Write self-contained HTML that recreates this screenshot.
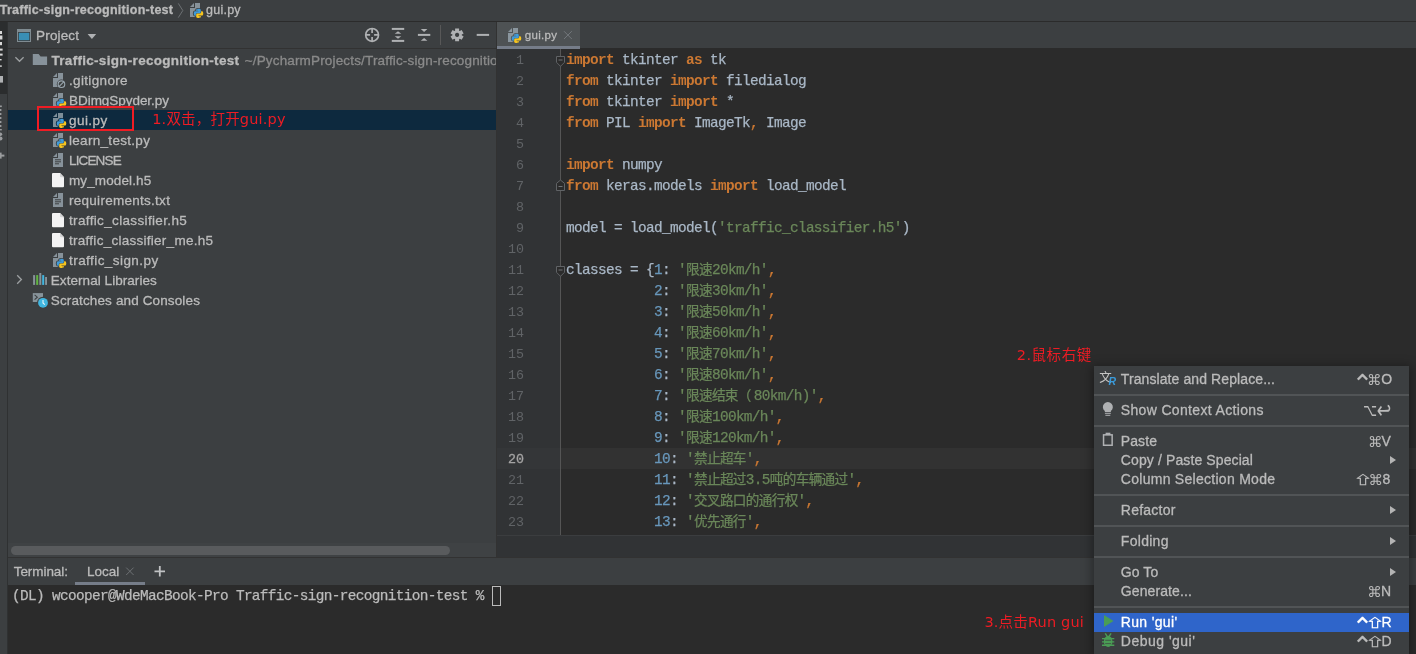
<!DOCTYPE html>
<html lang="zh">
<head>
<meta charset="utf-8">
<title>PyCharm - gui.py</title>
<style>
html,body{margin:0;padding:0;}
html{background:#3c3f41;width:1416px;height:654px;overflow:hidden;}
body{width:1416px;height:654px;overflow:hidden;background:#3c3f41;position:relative;will-change:transform;
 font-family:"Liberation Sans","Noto Sans CJK SC",sans-serif;font-size:13px;color:#bbbbbb;}
.a{position:absolute;white-space:pre;}
.ui{position:absolute;white-space:pre;line-height:20px;height:20px;font-size:13px;color:#bbbbbb;margin-top:1px;-webkit-text-stroke:0.3px currentColor;}
.mono{font-family:"Liberation Mono","Noto Sans CJK SC",monospace;}
.red{color:#ed1c24;font-family:"DejaVu Sans","Noto Sans CJK SC",sans-serif;}
/* top bar */
#topbar{left:0;top:0;width:1416px;height:21px;background:#3c3f41;}
#topline{left:0;top:21px;width:1416px;height:1px;background:#2b2b2b;}
/* left strip */
#strip{left:0;top:22px;width:7px;height:632px;background:#3c3f41;}
#stripsel{left:0;top:22px;width:7px;height:72px;background:#2b2d2e;}
#stripline{left:7px;top:22px;width:1px;height:632px;background:#2f3132;}
/* project */
#proj{left:8px;top:22px;width:489px;height:535px;background:#3c3f41;overflow:hidden;}
#projhead{left:0;top:0;width:488px;height:26px;}
#projline{left:8px;top:48px;width:489px;height:1px;background:#323232;}
#sel{left:8px;top:110px;width:488px;height:20px;background:#0d293e;}
/* editor */
#edtabs{left:497px;top:22px;width:919px;height:26px;background:#3c3f41;}
#tab{left:497px;top:22px;width:83px;height:27px;background:#4e5254;}
#tabul{left:497px;top:46px;width:83px;height:3px;background:#767d89;z-index:2;}
#edline{left:497px;top:48px;width:919px;height:1px;background:#2b2b2b;}
#gutter{left:497px;top:49px;width:63px;height:486px;background:#313335;}
#gline{left:560px;top:49px;width:1px;height:486px;background:#555555;}
#editor{left:561px;top:49px;width:855px;height:486px;background:#2b2b2b;}
#gcur{left:497px;top:448px;width:63px;height:21px;background:#343638;}
#curline{left:561px;top:448px;width:855px;height:21px;background:#323232;}
.ln{position:absolute;left:497px;width:27px;text-align:right;height:21px;line-height:21px;font-size:13.33px;color:#606366;font-family:"Liberation Mono",monospace;margin-top:1px;}
.cl{position:absolute;left:566px;height:21px;line-height:21px;font-size:14.4px;letter-spacing:-0.64px;color:#a9b7c6;white-space:pre;font-family:"Liberation Mono","Noto Sans CJK SC",monospace;margin-top:1px;-webkit-text-stroke:0.25px currentColor;}
.c{font-size:13.6px;}
.fw{margin-right:3px;}
.k{color:#cc7832;font-weight:bold;-webkit-text-stroke:0;}
.o{color:#cc7832;}
.s{color:#6a8759;}
.n{color:#6897bb;}
/* bottom */
#edbot{left:497px;top:535px;width:919px;height:22px;background:#313335;border-top:1px solid #3b3d3f;box-sizing:border-box;}
#vsplit{left:496px;top:22px;width:1px;height:535px;background:#323232;}
#htrack{left:8px;top:543px;width:488px;height:14px;background:#3f4244;}
#hscroll{left:11px;top:546px;width:439px;height:9px;border-radius:5px;background:#595b5d;}
#botline{left:8px;top:557px;width:1408px;height:1px;background:#323232;}
#termhead{left:8px;top:558px;width:1408px;height:26px;background:#3c3f41;}
#termul{left:75px;top:582px;width:70px;height:3px;background:#767d89;}
#term{left:8px;top:585px;width:1408px;height:69px;background:#2b2b2b;}
/* menu */
#menu{left:1094px;top:366px;width:315px;height:288px;overflow:hidden;background:#3c3f41;box-shadow:0 2px 10px 2px rgba(0,0,0,0.35);}
.mi{position:absolute;height:20px;line-height:20px;font-size:14px;color:#bbbbbb;white-space:pre;margin-top:0px;-webkit-text-stroke:0.3px currentColor;}
.sc{position:absolute;width:20px;text-align:center;height:20px;line-height:20px;color:#bbbbbb;white-space:pre;margin-top:1px;}
.sc.gc,.sc.gm,.sc.go,.sc.gr{font-family:"DejaVu Sans",sans-serif;}
.sc.gs{font-family:"Noto Sans CJK SC",sans-serif;}
.sc.gc{font-size:25px;margin-top:5px;-webkit-text-stroke:0.2px currentColor;}
.sc.gm{font-size:14.5px;}
.sc.go{font-size:14px;transform:scale(0.86,1.24);margin-top:-0.5px;}
.sc.gr{font-size:16px;transform:scale(1.08,1.46);}
.sc.gs{font-size:15px;transform:scale(1.2,0.79);margin-top:0px;-webkit-text-stroke:0.45px currentColor;}
.sc.l{font-size:14px;-webkit-text-stroke:0.3px currentColor;margin-top:0px;}
.sep{position:absolute;left:0;width:315px;height:2px;background:#515456;}
.arr{position:absolute;left:296px;width:0;height:0;border-left:6px solid #b4b4b4;border-top:4px solid transparent;border-bottom:4px solid transparent;}
</style>
</head>
<body>
<!-- TOP BAR -->
<div class="a" id="topbar"></div>
<div class="a" id="topline"></div>
<div class="ui" style="left:-0.3px;top:-1px;font-weight:bold;font-size:12.5px;letter-spacing:0.261px;" id="bc1">Traffic-sign-recognition-test</div>
<div class="ui" style="left:206.0px;top:-1px;font-size:12.5px;letter-spacing:0.248px;" id="bc2">gui.py</div>

<!-- LEFT STRIP -->
<div class="a" id="strip"></div>
<div class="a" id="stripsel"></div>
<div class="a" id="stripline"></div>

<!-- PROJECT PANEL -->
<div class="a" id="proj"></div>
<div class="a" id="projline"></div>
<div class="a" id="sel"></div>
<div class="ui" style="left:36.1px;top:25px;font-size:13.5px;letter-spacing:0.145px;" id="pj">Project</div>

<div class="ui" style="left:51.5px;top:50px;font-weight:bold;font-size:13.5px;letter-spacing:0.294px;" id="t0">Traffic-sign-recognition-test</div>
<div class="ui" style="left:244.7px;top:50px;color:#8a8a8a;width:251.5px;overflow:hidden;font-size:13.5px;letter-spacing:0.16px;" id="t0p">~/PycharmProjects/Traffic-sign-recognition-test</div>
<div class="ui" style="left:69.0px;top:70px;font-size:13.5px;letter-spacing:0.339px;" id="t1">.gitignore</div>
<div class="ui" style="left:69.0px;top:90px;font-size:13.5px;letter-spacing:-0.042px;" id="t2">BDimgSpyder.py</div>
<div class="ui" style="left:69.0px;top:110px;font-size:13.5px;letter-spacing:0.434px;" id="t3">gui.py</div>
<div class="ui" style="left:69.0px;top:130px;font-size:13.5px;letter-spacing:0.300px;" id="t4">learn_test.py</div>
<div class="ui" style="left:69.0px;top:150px;font-size:13.5px;letter-spacing:-0.847px;" id="t5">LICENSE</div>
<div class="ui" style="left:69.0px;top:170px;font-size:13.5px;letter-spacing:0.115px;" id="t6">my_model.h5</div>
<div class="ui" style="left:69.0px;top:190px;font-size:13.5px;letter-spacing:0.274px;" id="t7">requirements.txt</div>
<div class="ui" style="left:69.0px;top:210px;font-size:13.5px;letter-spacing:0.349px;" id="t8">traffic_classifier.h5</div>
<div class="ui" style="left:69.0px;top:230px;font-size:13.5px;letter-spacing:0.269px;" id="t9">traffic_classifier_me.h5</div>
<div class="ui" style="left:69.0px;top:250px;font-size:13.5px;letter-spacing:0.440px;" id="t10">traffic_sign.py</div>
<div class="ui" style="left:50.8px;top:270px;font-size:13.5px;letter-spacing:0.056px;" id="t11">External Libraries</div>
<div class="ui" style="left:50.8px;top:290px;font-size:13.5px;letter-spacing:0.131px;" id="t12">Scratches and Consoles</div>

<!-- EDITOR -->
<div class="a" id="edtabs"></div>
<div class="a" id="tab"></div>
<div class="a" id="tabul"></div>
<div class="a" id="edline"></div>
<div class="a" id="gutter"></div>
<div class="a" id="editor"></div>
<div class="a" id="gcur"></div>
<div class="a" id="curline"></div>
<div class="a" id="gline"></div>
<div class="ui" style="left:524.7px;top:24px;font-size:11.5px;letter-spacing:0.343px;" id="tabt">gui.py</div>

<!-- CODE -->
<div class="ln" style="top:49px;">1</div>
<div class="cl" style="top:49px"><span class="k">import</span> tkinter <span class="k">as</span> tk</div>
<div class="ln" style="top:70px;">2</div>
<div class="cl" style="top:70px"><span class="k">from</span> tkinter <span class="k">import</span> filedialog</div>
<div class="ln" style="top:91px;">3</div>
<div class="cl" style="top:91px"><span class="k">from</span> tkinter <span class="k">import</span> *</div>
<div class="ln" style="top:112px;">4</div>
<div class="cl" style="top:112px"><span class="k">from</span> PIL <span class="k">import</span> ImageTk<span class="o">,</span> Image</div>
<div class="ln" style="top:133px;">5</div>
<div class="ln" style="top:154px;">6</div>
<div class="cl" style="top:154px"><span class="k">import</span> numpy</div>
<div class="ln" style="top:175px;">7</div>
<div class="cl" style="top:175px"><span class="k">from</span> keras.models <span class="k">import</span> load_model</div>
<div class="ln" style="top:196px;">8</div>
<div class="ln" style="top:217px;">9</div>
<div class="cl" style="top:217px">model = load_model(<span class="s">'traffic_classifier.h5'</span>)</div>
<div class="ln" style="top:238px;">10</div>
<div class="ln" style="top:259px;">11</div>
<div class="cl" style="top:259px">classes = {<span class="n">1</span>: <span class="s">'<span class="c">限速</span>20km/h'</span><span class="o">,</span></div>
<div class="ln" style="top:280px;">12</div>
<div class="cl" style="top:280px">           <span class="n">2</span>: <span class="s">'<span class="c">限速</span>30km/h'</span><span class="o">,</span></div>
<div class="ln" style="top:301px;">13</div>
<div class="cl" style="top:301px">           <span class="n">3</span>: <span class="s">'<span class="c">限速</span>50km/h'</span><span class="o">,</span></div>
<div class="ln" style="top:322px;">14</div>
<div class="cl" style="top:322px">           <span class="n">4</span>: <span class="s">'<span class="c">限速</span>60km/h'</span><span class="o">,</span></div>
<div class="ln" style="top:343px;">15</div>
<div class="cl" style="top:343px">           <span class="n">5</span>: <span class="s">'<span class="c">限速</span>70km/h'</span><span class="o">,</span></div>
<div class="ln" style="top:364px;">16</div>
<div class="cl" style="top:364px">           <span class="n">6</span>: <span class="s">'<span class="c">限速</span>80km/h'</span><span class="o">,</span></div>
<div class="ln" style="top:385px;">17</div>
<div class="cl" style="top:385px">           <span class="n">7</span>: <span class="s">'<span class="c">限速结束<span class="fw">（</span></span>80km/h)'</span><span class="o">,</span></div>
<div class="ln" style="top:406px;">18</div>
<div class="cl" style="top:406px">           <span class="n">8</span>: <span class="s">'<span class="c">限速</span>100km/h'</span><span class="o">,</span></div>
<div class="ln" style="top:427px;">19</div>
<div class="cl" style="top:427px">           <span class="n">9</span>: <span class="s">'<span class="c">限速</span>120km/h'</span><span class="o">,</span></div>
<div class="ln" style="top:448px;color:#a4a3a3;-webkit-text-stroke:0.3px #a4a3a3;">20</div>
<div class="cl" style="top:448px">           <span class="n">10</span>: <span class="s">'<span class="c">禁止超车</span>'</span><span class="o">,</span></div>
<div class="ln" style="top:469px;">21</div>
<div class="cl" style="top:469px">           <span class="n">11</span>: <span class="s">'<span class="c">禁止超过</span>3.5<span class="c">吨的车辆通过</span>'</span><span class="o">,</span></div>
<div class="ln" style="top:490px;">22</div>
<div class="cl" style="top:490px">           <span class="n">12</span>: <span class="s">'<span class="c">交叉路口的通行权</span>'</span><span class="o">,</span></div>
<div class="ln" style="top:511px;">23</div>
<div class="cl" style="top:511px">           <span class="n">13</span>: <span class="s">'<span class="c">优先通行</span>'</span><span class="o">,</span></div>
<!-- BOTTOM -->
<div class="a" id="edbot"></div>
<div class="a" id="vsplit"></div>
<div class="a" id="htrack"></div>
<div class="a" id="hscroll"></div>
<div class="a" id="botline"></div>
<div class="a" id="termhead"></div>
<div class="a" id="term"></div>
<div class="a" id="termul"></div>
<div class="ui" style="left:13.7px;top:561px;font-size:13.5px;letter-spacing:-0.058px;" id="tm1">Terminal:</div>
<div class="ui" style="left:87.1px;top:561px;font-size:13.5px;letter-spacing:-0.020px;" id="tm2">Local</div>
<div class="a mono" style="left:12px;top:586px;height:21px;line-height:21px;font-size:14.4px;letter-spacing:-0.64px;color:#bbbbbb;-webkit-text-stroke:0.25px currentColor;" id="tmt">(DL) wcooper@WdeMacBook-Pro Traffic-sign-recognition-test % </div>
<div class="a" style="left:492px;top:586px;width:7px;height:18px;border:1px solid #bbbbbb;" id="cursor"></div>

<!-- ICONS -->
<svg class="a" style="left:0;top:0;pointer-events:none" width="1416" height="654" viewBox="0 0 1416 654">
<path d="M178.3,3.4 L182.8,10.5 L178.3,17.6" fill="none" stroke="#6c7073" stroke-width="1"/>
<g transform="translate(188,2)" fill="#9AA7B0" fill-opacity="0.8"><polygon points="6,1 2,5 6,5"/><polygon points="7,1 7,6 2,6 2,15 12,15 12,1"/></g><g transform="translate(188,2) translate(5.7,6.85) scale(0.0864,0.0832)"><path d="M54.9,0 C26.8,0 28.6,12.2 28.6,12.2 l0.03,12.6 h26.8 v3.8 H17.9 C17.9,28.6 0,26.6 0,54.9 c0,28.3 15.7,27.3 15.7,27.3 h9.4 V69.1 c0,0 -0.5,-15.7 15.4,-15.7 h26.6 c0,0 14.9,0.24 14.9,-14.4 V14.8 C82,14.8 84.3,0 54.9,0 z" fill="#3c3f41" stroke="#3c3f41" stroke-width="20" stroke-linejoin="round"/><path d="M55.7,110 c28.1,0 26.3,-12.2 26.3,-12.2 l-0.03,-12.6 H55.2 v-3.8 h37.5 c0,0 18,2 18,-26.3 c0,-28.3 -15.7,-27.3 -15.7,-27.3 h-9.4 v13.1 c0,0 0.5,15.7 -15.4,15.7 H43.6 c0,0 -14.9,-0.24 -14.9,14.4 v24.2 c0,0 -2.3,14.8 27.1,14.8 z" fill="#3c3f41" stroke="#3c3f41" stroke-width="20" stroke-linejoin="round"/><path d="M54.9,0 C26.8,0 28.6,12.2 28.6,12.2 l0.03,12.6 h26.8 v3.8 H17.9 C17.9,28.6 0,26.6 0,54.9 c0,28.3 15.7,27.3 15.7,27.3 h9.4 V69.1 c0,0 -0.5,-15.7 15.4,-15.7 h26.6 c0,0 14.9,0.24 14.9,-14.4 V14.8 C82,14.8 84.3,0 54.9,0 z" fill="#3f9bd8"/><path d="M55.7,110 c28.1,0 26.3,-12.2 26.3,-12.2 l-0.03,-12.6 H55.2 v-3.8 h37.5 c0,0 18,2 18,-26.3 c0,-28.3 -15.7,-27.3 -15.7,-27.3 h-9.4 v13.1 c0,0 0.5,15.7 -15.4,15.7 H43.6 c0,0 -14.9,-0.24 -14.9,14.4 v24.2 c0,0 -2.3,14.8 27.1,14.8 z" fill="#f7c51e"/><circle cx="40" cy="13.5" r="5" fill="#3c3f41"/><circle cx="70.5" cy="96.5" r="5" fill="#3c3f41"/></g>
<rect x="17.5" y="29.5" width="13" height="12" fill="none" stroke="#7f8b91" stroke-width="1"/><rect x="17" y="29" width="14" height="3" fill="#7f8b91"/><rect x="18.8" y="32.8" width="10.5" height="7.4" fill="#3a8fb5"/>
<polygon points="87.6,34 96.2,34 91.9,39" fill="#afb1b3"/>
<g fill="none" stroke="#afb1b3" stroke-width="1.7"><circle cx="372.1" cy="34.9" r="6.4"/><path d="M372.1,28.4 V32.9 M372.1,36.9 V41.4 M365.6,34.9 H370.1 M374.1,34.9 H378.6"/></g>
<g fill="#afb1b3"><rect x="391.8" y="27.9" width="12.4" height="2"/><rect x="391.8" y="39.9" width="12.4" height="2"/><polygon points="398,31.2 401.3,33.8 394.7,33.8"/><polygon points="398,38.8 401.3,36.2 394.7,36.2"/></g>
<g fill="#afb1b3"><rect x="417.9" y="33.9" width="12.4" height="2"/><polygon points="420.8,29.1 427.4,29.1 424.1,31.9"/><polygon points="420.8,40.8 427.4,40.8 424.1,37.9"/></g>
<rect x="440" y="25" width="1" height="20" fill="#585858"/>
<path d="M455.12,28.50 L459.08,28.50 L459.10,30.65 L459.78,31.04 L461.65,29.98 L463.63,33.41 L461.78,34.51 L461.78,35.29 L463.63,36.39 L461.65,39.82 L459.78,38.76 L459.10,39.15 L459.08,41.30 L455.12,41.30 L455.10,39.15 L454.42,38.76 L452.55,39.82 L450.57,36.39 L452.42,35.29 L452.42,34.51 L450.57,33.41 L452.55,29.98 L454.42,31.04 L455.10,30.65 Z M457.10,32.80 a2.1,2.1 0 1 0 0.01,0z" fill="#afb1b3" fill-rule="evenodd"/>
<rect x="476.7" y="33.9" width="12.4" height="2" fill="#afb1b3"/>
<path d="M15.4,57.2 L19.5,61.3 L23.6,57.2" fill="none" stroke="#9da0a2" stroke-width="1.3"/>
<path d="M17.2,275.3 L21.4,279.5 L17.2,283.7" fill="none" stroke="#9da0a2" stroke-width="1.3"/>
<path d="M32.8,54 H38.6 L40.6,56.6 H47.1 V65 H32.8 Z" fill="#9AA7B0" fill-opacity=".8"/>
<g transform="translate(51,72)" fill="#9AA7B0" fill-opacity="0.8"><polygon points="6,1 2,5 6,5"/><polygon points="7,1 7,6 2,6 2,15 12,15 12,1"/></g><g transform="translate(51,72)"><circle cx="10.45" cy="12.15" r="4.6" fill="#3c3f41"/><circle cx="10.45" cy="12.15" r="3.3" fill="none" stroke="#9AA7B0" stroke-width="1.1"/><path d="M8.2,14.4 L12.7,9.9" stroke="#9AA7B0" stroke-width="1.1"/></g>
<g transform="translate(51,92)" fill="#9AA7B0" fill-opacity="0.8"><polygon points="6,1 2,5 6,5"/><polygon points="7,1 7,6 2,6 2,15 12,15 12,1"/></g><g transform="translate(51,92) translate(5.7,6.85) scale(0.0864,0.0832)"><path d="M54.9,0 C26.8,0 28.6,12.2 28.6,12.2 l0.03,12.6 h26.8 v3.8 H17.9 C17.9,28.6 0,26.6 0,54.9 c0,28.3 15.7,27.3 15.7,27.3 h9.4 V69.1 c0,0 -0.5,-15.7 15.4,-15.7 h26.6 c0,0 14.9,0.24 14.9,-14.4 V14.8 C82,14.8 84.3,0 54.9,0 z" fill="#3c3f41" stroke="#3c3f41" stroke-width="20" stroke-linejoin="round"/><path d="M55.7,110 c28.1,0 26.3,-12.2 26.3,-12.2 l-0.03,-12.6 H55.2 v-3.8 h37.5 c0,0 18,2 18,-26.3 c0,-28.3 -15.7,-27.3 -15.7,-27.3 h-9.4 v13.1 c0,0 0.5,15.7 -15.4,15.7 H43.6 c0,0 -14.9,-0.24 -14.9,14.4 v24.2 c0,0 -2.3,14.8 27.1,14.8 z" fill="#3c3f41" stroke="#3c3f41" stroke-width="20" stroke-linejoin="round"/><path d="M54.9,0 C26.8,0 28.6,12.2 28.6,12.2 l0.03,12.6 h26.8 v3.8 H17.9 C17.9,28.6 0,26.6 0,54.9 c0,28.3 15.7,27.3 15.7,27.3 h9.4 V69.1 c0,0 -0.5,-15.7 15.4,-15.7 h26.6 c0,0 14.9,0.24 14.9,-14.4 V14.8 C82,14.8 84.3,0 54.9,0 z" fill="#3f9bd8"/><path d="M55.7,110 c28.1,0 26.3,-12.2 26.3,-12.2 l-0.03,-12.6 H55.2 v-3.8 h37.5 c0,0 18,2 18,-26.3 c0,-28.3 -15.7,-27.3 -15.7,-27.3 h-9.4 v13.1 c0,0 0.5,15.7 -15.4,15.7 H43.6 c0,0 -14.9,-0.24 -14.9,14.4 v24.2 c0,0 -2.3,14.8 27.1,14.8 z" fill="#f7c51e"/><circle cx="40" cy="13.5" r="5" fill="#3c3f41"/><circle cx="70.5" cy="96.5" r="5" fill="#3c3f41"/></g>
<g transform="translate(51,112)" fill="#9AA7B0" fill-opacity="0.8"><polygon points="6,1 2,5 6,5"/><polygon points="7,1 7,6 2,6 2,15 12,15 12,1"/></g><g transform="translate(51,112) translate(5.7,6.85) scale(0.0864,0.0832)"><path d="M54.9,0 C26.8,0 28.6,12.2 28.6,12.2 l0.03,12.6 h26.8 v3.8 H17.9 C17.9,28.6 0,26.6 0,54.9 c0,28.3 15.7,27.3 15.7,27.3 h9.4 V69.1 c0,0 -0.5,-15.7 15.4,-15.7 h26.6 c0,0 14.9,0.24 14.9,-14.4 V14.8 C82,14.8 84.3,0 54.9,0 z" fill="#0d293e" stroke="#0d293e" stroke-width="20" stroke-linejoin="round"/><path d="M55.7,110 c28.1,0 26.3,-12.2 26.3,-12.2 l-0.03,-12.6 H55.2 v-3.8 h37.5 c0,0 18,2 18,-26.3 c0,-28.3 -15.7,-27.3 -15.7,-27.3 h-9.4 v13.1 c0,0 0.5,15.7 -15.4,15.7 H43.6 c0,0 -14.9,-0.24 -14.9,14.4 v24.2 c0,0 -2.3,14.8 27.1,14.8 z" fill="#0d293e" stroke="#0d293e" stroke-width="20" stroke-linejoin="round"/><path d="M54.9,0 C26.8,0 28.6,12.2 28.6,12.2 l0.03,12.6 h26.8 v3.8 H17.9 C17.9,28.6 0,26.6 0,54.9 c0,28.3 15.7,27.3 15.7,27.3 h9.4 V69.1 c0,0 -0.5,-15.7 15.4,-15.7 h26.6 c0,0 14.9,0.24 14.9,-14.4 V14.8 C82,14.8 84.3,0 54.9,0 z" fill="#3f9bd8"/><path d="M55.7,110 c28.1,0 26.3,-12.2 26.3,-12.2 l-0.03,-12.6 H55.2 v-3.8 h37.5 c0,0 18,2 18,-26.3 c0,-28.3 -15.7,-27.3 -15.7,-27.3 h-9.4 v13.1 c0,0 0.5,15.7 -15.4,15.7 H43.6 c0,0 -14.9,-0.24 -14.9,14.4 v24.2 c0,0 -2.3,14.8 27.1,14.8 z" fill="#f7c51e"/><circle cx="40" cy="13.5" r="5" fill="#0d293e"/><circle cx="70.5" cy="96.5" r="5" fill="#0d293e"/></g>
<g transform="translate(51,132)" fill="#9AA7B0" fill-opacity="0.8"><polygon points="6,1 2,5 6,5"/><polygon points="7,1 7,6 2,6 2,15 12,15 12,1"/></g><g transform="translate(51,132) translate(5.7,6.85) scale(0.0864,0.0832)"><path d="M54.9,0 C26.8,0 28.6,12.2 28.6,12.2 l0.03,12.6 h26.8 v3.8 H17.9 C17.9,28.6 0,26.6 0,54.9 c0,28.3 15.7,27.3 15.7,27.3 h9.4 V69.1 c0,0 -0.5,-15.7 15.4,-15.7 h26.6 c0,0 14.9,0.24 14.9,-14.4 V14.8 C82,14.8 84.3,0 54.9,0 z" fill="#3c3f41" stroke="#3c3f41" stroke-width="20" stroke-linejoin="round"/><path d="M55.7,110 c28.1,0 26.3,-12.2 26.3,-12.2 l-0.03,-12.6 H55.2 v-3.8 h37.5 c0,0 18,2 18,-26.3 c0,-28.3 -15.7,-27.3 -15.7,-27.3 h-9.4 v13.1 c0,0 0.5,15.7 -15.4,15.7 H43.6 c0,0 -14.9,-0.24 -14.9,14.4 v24.2 c0,0 -2.3,14.8 27.1,14.8 z" fill="#3c3f41" stroke="#3c3f41" stroke-width="20" stroke-linejoin="round"/><path d="M54.9,0 C26.8,0 28.6,12.2 28.6,12.2 l0.03,12.6 h26.8 v3.8 H17.9 C17.9,28.6 0,26.6 0,54.9 c0,28.3 15.7,27.3 15.7,27.3 h9.4 V69.1 c0,0 -0.5,-15.7 15.4,-15.7 h26.6 c0,0 14.9,0.24 14.9,-14.4 V14.8 C82,14.8 84.3,0 54.9,0 z" fill="#3f9bd8"/><path d="M55.7,110 c28.1,0 26.3,-12.2 26.3,-12.2 l-0.03,-12.6 H55.2 v-3.8 h37.5 c0,0 18,2 18,-26.3 c0,-28.3 -15.7,-27.3 -15.7,-27.3 h-9.4 v13.1 c0,0 0.5,15.7 -15.4,15.7 H43.6 c0,0 -14.9,-0.24 -14.9,14.4 v24.2 c0,0 -2.3,14.8 27.1,14.8 z" fill="#f7c51e"/><circle cx="40" cy="13.5" r="5" fill="#3c3f41"/><circle cx="70.5" cy="96.5" r="5" fill="#3c3f41"/></g>
<g transform="translate(51,152)" fill="#9AA7B0" fill-opacity="0.8"><polygon points="6,1 2,5 6,5"/><polygon points="7,1 7,6 2,6 2,15 12,15 12,1"/></g><g transform="translate(51,152)" fill="#3c3f41"><rect x="4" y="7.3" width="6" height="1"/><rect x="4" y="9.3" width="6" height="1"/><rect x="4" y="11.3" width="4" height="1"/></g>
<g transform="translate(52,173)"><path d="M1,0 H8 L12,4.2 V13.2 a1,1 0 0 1 -1,1 H1 a1,1 0 0 1 -1,-1 V1 a1,1 0 0 1 1,-1z" fill="#f3f3f3"/><path d="M8,0 L12,4.2 H9 a1,1 0 0 1 -1,-1z" fill="#d4d4d4"/><path d="M8,0 L12,4.2" stroke="#bdbdbd" stroke-width="0.5" fill="none"/></g>
<g transform="translate(51,192)" fill="#9AA7B0" fill-opacity="0.8"><polygon points="6,1 2,5 6,5"/><polygon points="7,1 7,6 2,6 2,15 12,15 12,1"/></g><g transform="translate(51,192)" fill="#3c3f41"><rect x="4" y="7.3" width="6" height="1"/><rect x="4" y="9.3" width="6" height="1"/><rect x="4" y="11.3" width="4" height="1"/></g>
<g transform="translate(52,213)"><path d="M1,0 H8 L12,4.2 V13.2 a1,1 0 0 1 -1,1 H1 a1,1 0 0 1 -1,-1 V1 a1,1 0 0 1 1,-1z" fill="#f3f3f3"/><path d="M8,0 L12,4.2 H9 a1,1 0 0 1 -1,-1z" fill="#d4d4d4"/><path d="M8,0 L12,4.2" stroke="#bdbdbd" stroke-width="0.5" fill="none"/></g>
<g transform="translate(52,233)"><path d="M1,0 H8 L12,4.2 V13.2 a1,1 0 0 1 -1,1 H1 a1,1 0 0 1 -1,-1 V1 a1,1 0 0 1 1,-1z" fill="#f3f3f3"/><path d="M8,0 L12,4.2 H9 a1,1 0 0 1 -1,-1z" fill="#d4d4d4"/><path d="M8,0 L12,4.2" stroke="#bdbdbd" stroke-width="0.5" fill="none"/></g>
<g transform="translate(51,252)" fill="#9AA7B0" fill-opacity="0.8"><polygon points="6,1 2,5 6,5"/><polygon points="7,1 7,6 2,6 2,15 12,15 12,1"/></g><g transform="translate(51,252) translate(5.7,6.85) scale(0.0864,0.0832)"><path d="M54.9,0 C26.8,0 28.6,12.2 28.6,12.2 l0.03,12.6 h26.8 v3.8 H17.9 C17.9,28.6 0,26.6 0,54.9 c0,28.3 15.7,27.3 15.7,27.3 h9.4 V69.1 c0,0 -0.5,-15.7 15.4,-15.7 h26.6 c0,0 14.9,0.24 14.9,-14.4 V14.8 C82,14.8 84.3,0 54.9,0 z" fill="#3c3f41" stroke="#3c3f41" stroke-width="20" stroke-linejoin="round"/><path d="M55.7,110 c28.1,0 26.3,-12.2 26.3,-12.2 l-0.03,-12.6 H55.2 v-3.8 h37.5 c0,0 18,2 18,-26.3 c0,-28.3 -15.7,-27.3 -15.7,-27.3 h-9.4 v13.1 c0,0 0.5,15.7 -15.4,15.7 H43.6 c0,0 -14.9,-0.24 -14.9,14.4 v24.2 c0,0 -2.3,14.8 27.1,14.8 z" fill="#3c3f41" stroke="#3c3f41" stroke-width="20" stroke-linejoin="round"/><path d="M54.9,0 C26.8,0 28.6,12.2 28.6,12.2 l0.03,12.6 h26.8 v3.8 H17.9 C17.9,28.6 0,26.6 0,54.9 c0,28.3 15.7,27.3 15.7,27.3 h9.4 V69.1 c0,0 -0.5,-15.7 15.4,-15.7 h26.6 c0,0 14.9,0.24 14.9,-14.4 V14.8 C82,14.8 84.3,0 54.9,0 z" fill="#3f9bd8"/><path d="M55.7,110 c28.1,0 26.3,-12.2 26.3,-12.2 l-0.03,-12.6 H55.2 v-3.8 h37.5 c0,0 18,2 18,-26.3 c0,-28.3 -15.7,-27.3 -15.7,-27.3 h-9.4 v13.1 c0,0 0.5,15.7 -15.4,15.7 H43.6 c0,0 -14.9,-0.24 -14.9,14.4 v24.2 c0,0 -2.3,14.8 27.1,14.8 z" fill="#f7c51e"/><circle cx="40" cy="13.5" r="5" fill="#3c3f41"/><circle cx="70.5" cy="96.5" r="5" fill="#3c3f41"/></g>
<g><rect x="33.1" y="275.1" width="2" height="9.8" fill="#87939a"/><rect x="36.2" y="275.1" width="2" height="9.8" fill="#62b543"/><rect x="39.3" y="273" width="2" height="11.9" fill="#87939a"/><rect x="42.2" y="275.1" width="2" height="9.8" fill="#40b6e0"/><rect x="45.1" y="277" width="1.9" height="7.9" fill="#87939a"/></g>
<g><rect x="32.8" y="293.1" width="10.2" height="8.9" fill="#87939a"/><path d="M34.6,294.8 L37.3,297.2 L34.6,299.6" fill="none" stroke="#3c3f41" stroke-width="1.1"/><circle cx="43" cy="302.8" r="6" fill="#3c3f41"/><circle cx="43" cy="302.8" r="4.9" fill="#40b6e0"/><path d="M43,300 V303 L44.8,304.6" fill="none" stroke="#e8f6fb" stroke-width="1.1"/></g>
<g transform="translate(506,27)" fill="#9AA7B0" fill-opacity="0.8"><polygon points="6,1 2,5 6,5"/><polygon points="7,1 7,6 2,6 2,15 12,15 12,1"/></g><g transform="translate(506,27) translate(5.7,6.85) scale(0.0864,0.0832)"><path d="M54.9,0 C26.8,0 28.6,12.2 28.6,12.2 l0.03,12.6 h26.8 v3.8 H17.9 C17.9,28.6 0,26.6 0,54.9 c0,28.3 15.7,27.3 15.7,27.3 h9.4 V69.1 c0,0 -0.5,-15.7 15.4,-15.7 h26.6 c0,0 14.9,0.24 14.9,-14.4 V14.8 C82,14.8 84.3,0 54.9,0 z" fill="#4e5254" stroke="#4e5254" stroke-width="20" stroke-linejoin="round"/><path d="M55.7,110 c28.1,0 26.3,-12.2 26.3,-12.2 l-0.03,-12.6 H55.2 v-3.8 h37.5 c0,0 18,2 18,-26.3 c0,-28.3 -15.7,-27.3 -15.7,-27.3 h-9.4 v13.1 c0,0 0.5,15.7 -15.4,15.7 H43.6 c0,0 -14.9,-0.24 -14.9,14.4 v24.2 c0,0 -2.3,14.8 27.1,14.8 z" fill="#4e5254" stroke="#4e5254" stroke-width="20" stroke-linejoin="round"/><path d="M54.9,0 C26.8,0 28.6,12.2 28.6,12.2 l0.03,12.6 h26.8 v3.8 H17.9 C17.9,28.6 0,26.6 0,54.9 c0,28.3 15.7,27.3 15.7,27.3 h9.4 V69.1 c0,0 -0.5,-15.7 15.4,-15.7 h26.6 c0,0 14.9,0.24 14.9,-14.4 V14.8 C82,14.8 84.3,0 54.9,0 z" fill="#3f9bd8"/><path d="M55.7,110 c28.1,0 26.3,-12.2 26.3,-12.2 l-0.03,-12.6 H55.2 v-3.8 h37.5 c0,0 18,2 18,-26.3 c0,-28.3 -15.7,-27.3 -15.7,-27.3 h-9.4 v13.1 c0,0 0.5,15.7 -15.4,15.7 H43.6 c0,0 -14.9,-0.24 -14.9,14.4 v24.2 c0,0 -2.3,14.8 27.1,14.8 z" fill="#f7c51e"/><circle cx="40" cy="13.5" r="5" fill="#4e5254"/><circle cx="70.5" cy="96.5" r="5" fill="#4e5254"/></g>
<path d="M564,31.2 L571.8,39 M571.8,31.2 L564,39" stroke="#767b7f" stroke-width="0.9" fill="none"/>
<path d="M556.5,56.5 H564.5 V62.3 L560.5,66.3 L556.5,62.3 Z" fill="#2b2b2b" stroke="#606366" stroke-width="1"/><path d="M558.5,60.0 H562.5" stroke="#707376" stroke-width="1"/>
<path d="M556.5,266.5 H564.5 V272.3 L560.5,276.3 L556.5,272.3 Z" fill="#2b2b2b" stroke="#606366" stroke-width="1"/><path d="M558.5,270.0 H562.5" stroke="#707376" stroke-width="1"/>
<path d="M556.5,190.5 H564.5 V183.3 L560.5,180.1 L556.5,183.3 Z" fill="#2b2b2b" stroke="#606366" stroke-width="1"/><path d="M558.5,186.5 H562.5" stroke="#707376" stroke-width="1"/>
<path d="M126.2,567.6 L133.6,575 M133.6,567.6 L126.2,575" stroke="#6c7073" stroke-width="1" fill="none"/>
<path d="M154.5,571.3 H165 M159.8,566 V576.6" stroke="#c0c2c4" stroke-width="1.8" fill="none"/>
<g fill="#d8d8d8"><rect x="0" y="31" width="2" height="3"/><rect x="0" y="35.5" width="2.4" height="4"/><rect x="0" y="42" width="2" height="3.2"/><rect x="0" y="48.6" width="2.6" height="2"/><rect x="0" y="53.6" width="2.6" height="2"/><rect x="0" y="59" width="1.6" height="1.4"/><rect x="0" y="65.4" width="1.8" height="1.4"/></g>
<rect x="0" y="76" width="3" height="6.6" fill="#afb1b3"/>
<g fill="#9a9c9e"><rect x="0" y="105.5" width="1.8" height="1.6"/><rect x="0" y="109" width="1.4" height="2"/><rect x="0" y="113" width="1.4" height="2"/><rect x="0" y="117" width="1.4" height="2"/><rect x="0" y="121" width="1.4" height="2"/><rect x="0" y="125" width="1.4" height="2"/><rect x="0" y="129" width="1.8" height="1.4"/><circle cx="0.4" cy="134.3" r="1.8"/><circle cx="0.4" cy="138.5" r="2.1"/><rect x="0" y="154.6" width="4.4" height="2"/><rect x="0" y="152.6" width="1.6" height="6"/></g>
</svg>
<!-- /ICONS -->
<!-- ANNOTATIONS -->
<div class="a" style="left:39px;top:108px;width:93px;height:2px;background:#3c3f41;"></div>
<div class="a" style="left:37px;top:106px;width:93px;height:21px;border:2px solid #f01c24;"></div>
<div class="a red" style="left:152.2px;top:109px;height:20px;line-height:20px;font-size:14.5px;letter-spacing:0.187px;" id="r1">1.双击，打开gui.py</div>
<div class="a red" style="left:1016.7px;top:345px;height:20px;line-height:20px;font-size:14.5px;letter-spacing:0.531px;" id="r2">2.鼠标右键</div>
<div class="a red" style="left:984.4px;top:612px;height:20px;line-height:20px;font-size:14.5px;letter-spacing:0.183px;" id="r3">3.点击Run gui</div>
<!-- /ANNOTATIONS -->
<!-- MENU -->
<div class="a" id="menu">
<div class="a" style="left:0;top:247px;width:315px;height:19px;background:#2f65ca;"></div>
<div class="sep" style="top:28px"></div>
<div class="sep" style="top:59px"></div>
<div class="sep" style="top:128px"></div>
<div class="sep" style="top:159px"></div>
<div class="sep" style="top:190px"></div>
<div class="sep" style="top:240px"></div>
<div class="mi" style="left:26.8px;top:3.1px;font-size:14px;letter-spacing:0.095px;" id="m1">Translate and Replace...</div>
<div class="sc gc" style="left:258.0px;top:3.1px;">⌃</div>
<div class="sc gm" style="left:270.3px;top:3.1px;">⌘</div>
<div class="sc l" style="left:282.6px;top:3.1px;">O</div>
<div class="mi" style="left:26.8px;top:34.2px;font-size:14px;letter-spacing:0.337px;" id="m2">Show Context Actions</div>
<div class="sc go" style="left:265.9px;top:34.2px;">⌥</div>
<div class="sc gr" style="left:280.1px;top:34.2px;">↩</div>
<div class="mi" style="left:26.8px;top:64.8px;font-size:14px;letter-spacing:0.097px;" id="m3">Paste</div>
<div class="sc gm" style="left:271.3px;top:64.8px;">⌘</div>
<div class="sc l" style="left:282.2px;top:64.8px;">V</div>
<div class="mi" style="left:26.8px;top:84.3px;font-size:14px;letter-spacing:0.112px;" id="m4">Copy / Paste Special</div>
<div class="arr" style="top:90.3px"></div>
<div class="mi" style="left:26.8px;top:103.2px;font-size:14px;letter-spacing:0.278px;" id="m5">Column Selection Mode</div>
<div class="sc gs" style="left:258.9px;top:103.2px;">⇧</div>
<div class="sc gm" style="left:271.7px;top:103.2px;">⌘</div>
<div class="sc l" style="left:282.4px;top:103.2px;">8</div>
<div class="mi" style="left:26.8px;top:133.9px;font-size:14px;letter-spacing:0.240px;" id="m6">Refactor</div>
<div class="arr" style="top:139.9px"></div>
<div class="mi" style="left:26.8px;top:165.0px;font-size:14px;letter-spacing:0.296px;" id="m7">Folding</div>
<div class="arr" style="top:171.0px"></div>
<div class="mi" style="left:26.8px;top:196.3px;font-size:14px;letter-spacing:0.073px;" id="m8">Go To</div>
<div class="arr" style="top:202.3px"></div>
<div class="mi" style="left:26.8px;top:215.2px;font-size:14px;letter-spacing:0.095px;" id="m9">Generate...</div>
<div class="sc gm" style="left:270.5px;top:215.2px;">⌘</div>
<div class="sc l" style="left:282.0px;top:215.2px;">N</div>
<div class="mi" style="left:26.8px;top:245.6px;color:#ffffff;font-size:14px;letter-spacing:0.336px;" id="m10">Run 'gui'</div>
<div class="sc gc" style="left:258.0px;top:245.6px;color:#ffffff;">⌃</div>
<div class="sc gs" style="left:270.5px;top:245.6px;color:#ffffff;">⇧</div>
<div class="sc l" style="left:282.5px;top:245.6px;color:#ffffff;">R</div>
<div class="mi" style="left:26.8px;top:265.0px;font-size:14px;letter-spacing:0.491px;" id="m11">Debug 'gui'</div>
<div class="sc gc" style="left:258.0px;top:265.0px;">⌃</div>
<div class="sc gs" style="left:270.5px;top:265.0px;">⇧</div>
<div class="sc l" style="left:282.5px;top:265.0px;">D</div>
<svg class="a" style="left:0;top:0" width="315" height="288" viewBox="1094 366 315 288"><path d="M1104.85,411 A5,5 0 1 1 1110.85,411 L1110.85,411.9 L1104.85,411.9 Z" fill="#afb1b3"/><rect x="1104.9" y="412.8" width="5.9" height="1" fill="#afb1b3"/><rect x="1105.4" y="414.8" width="4.9" height="1" fill="#afb1b3"/><rect x="1103.55" y="434.85" width="8.6" height="10.4" fill="none" stroke="#afb1b3" stroke-width="1.5"/><rect x="1105.6" y="432.7" width="4.8" height="2.4" fill="#afb1b3"/><polygon points="1104,615.1 1113.5,621 1104,626.9" fill="#4a9d55"/><g stroke="#4a9d55" stroke-width="1.4" fill="none"><path d="M1102,638.6 H1114.3 M1102,641.9 H1114.3 M1102,645.2 H1114.3"/><path d="M1105.2,633.3 L1107.2,636.4 M1111.1,633.3 L1109.1,636.4"/></g><ellipse cx="1108.15" cy="641.4" rx="4.3" ry="5.6" fill="#4a9d55"/><path d="M1105.2,640.3 H1111.1 M1105.2,643.6 H1111.1" stroke="#3c3f41" stroke-width="0.7"/></svg>
<div class="a" style="left:5.2px;top:4.0px;font-family:'Noto Sans CJK SC',sans-serif;font-size:12.5px;line-height:14px;color:#c4c4c4;">文</div>
<div class="a" style="left:14.6px;top:9.0px;font-size:10.5px;line-height:12px;font-weight:bold;font-style:italic;color:#3a9ad9;">R</div>
</div>
<!-- /MENU -->
</body>
</html>
